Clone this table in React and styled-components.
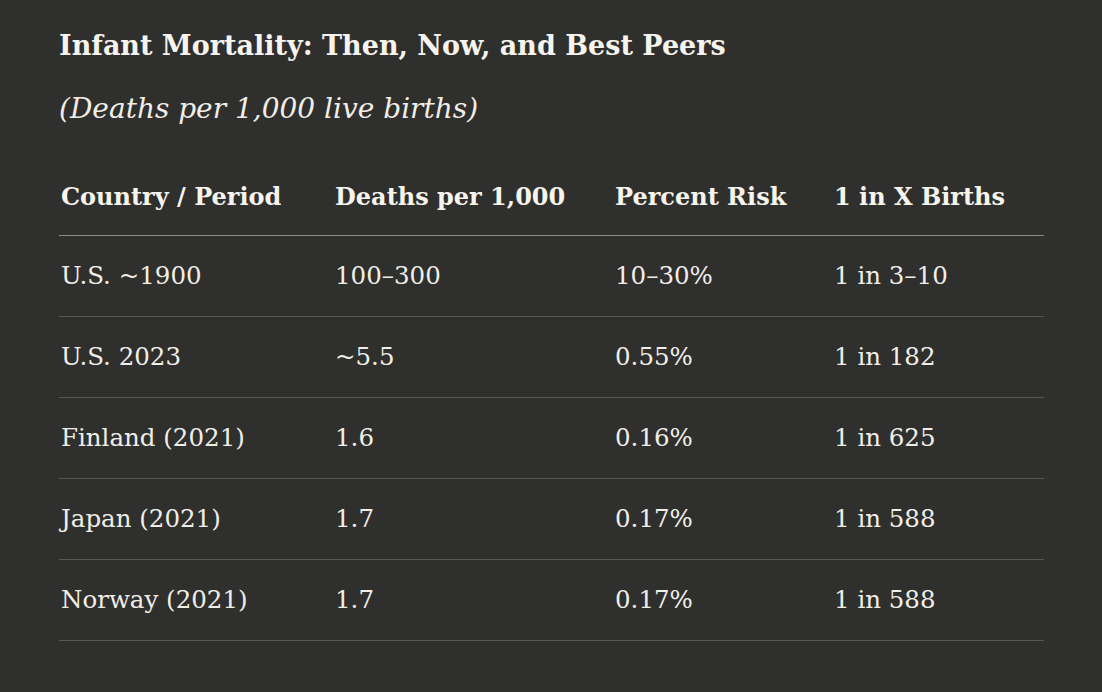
import React from 'react'
import styled, { createGlobalStyle } from 'styled-components'

const GlobalStyle = createGlobalStyle`
  html, body {
    margin: 0;
    padding: 0;
    background: #2f2f2d;
  }
  body {
    font-family: "DejaVu Serif", "Liberation Serif", serif;
    color: #f4f1ea;
  }
`

const columns = [
  { label: 'Country / Period', width: 274 },
  { label: 'Deaths per 1,000', width: 280 },
  { label: 'Percent Risk', width: 219 },
  { label: '1 in X Births', width: 212 },
]

const rows = [
  ['U.S. ~1900', '100–300', '10–30%', '1 in 3–10'],
  ['U.S. 2023', '~5.5', '0.55%', '1 in 182'],
  ['Finland (2021)', '1.6', '0.16%', '1 in 625'],
  ['Japan (2021)', '1.7', '0.17%', '1 in 588'],
  ['Norway (2021)', '1.7', '0.17%', '1 in 588'],
]

const App = () => {
  return (
    <>
      <GlobalStyle />
      <Page>
        <Title>Infant Mortality: Then, Now, and Best Peers</Title>
        <Subtitle>(Deaths per 1,000 live births)</Subtitle>
        <Table>
          <thead>
            <tr>
              {columns.map((c) => (
                <Th key={c.label} $w={c.width}>{c.label}</Th>
              ))}
            </tr>
          </thead>
          <tbody>
            {rows.map((r) => (
              <tr key={r[0]}>
                {r.map((c, i) => (
                  <Td key={i}>{c}</Td>
                ))}
              </tr>
            ))}
          </tbody>
        </Table>
      </Page>
    </>
  )
}

const Page = styled.div`
  width: 1102px;
  height: 692px;
  box-sizing: border-box;
  padding: 28px 58px 0 59px;
  background: #2f2f2d;
`

const Title = styled.h2`
  margin: 0;
  font-size: 27px;
  line-height: 36px;
  font-weight: 700;
  color: #f7f4ee;
`

const Subtitle = styled.p`
  margin: 26px 0 0;
  font-size: 28px;
  line-height: 38px;
  font-style: italic;
  color: #f1eee8;
`

const Table = styled.table`
  width: 985px;
  margin-top: 38px;
  border-collapse: collapse;
  table-layout: fixed;
`

const Th = styled.th`
  box-sizing: border-box;
  width: ${(p) => p.$w}px;
  text-align: left;
  font-size: 24px;
  font-weight: 700;
  line-height: 30px;
  padding: 16px 2px 23px;
  border-bottom: 1px solid #8c8b85;
  color: #f7f4ee;
  white-space: nowrap;
`

const Td = styled.td`
  font-size: 24.5px;
  line-height: 30px;
  padding: 25px 2px;
  border-bottom: 1px solid #585855;
  color: #f1eee8;
  white-space: nowrap;
`

export default App
